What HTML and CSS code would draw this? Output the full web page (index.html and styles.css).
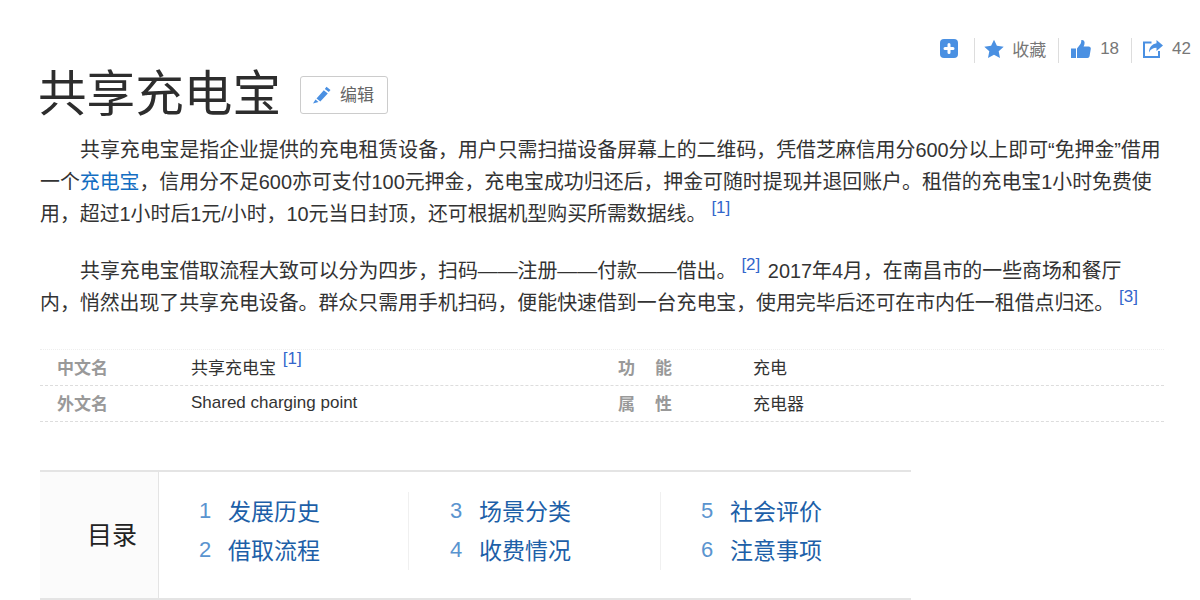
FILE: index.html
```html
<!DOCTYPE html>
<html lang="zh-CN">
<head>
<meta charset="utf-8">
<title>共享充电宝</title>
<link rel="stylesheet" href="styles.css">
</head>
<body>
<div class="page">
  <div class="tools">
    <span class="tool tool-add">
      <svg class="ic" width="18" height="19" viewBox="0 0 18 19"><rect x="0" y="0" width="18" height="19" rx="4" fill="#4a90e2"/><path d="M9 5.500v8M5 9.500h8" stroke="#fff" stroke-width="3" stroke-linecap="round"/></svg>
    </span>
    <span class="tool tool-star">
      <svg class="ic" width="20" height="20" viewBox="0 0 20 20"><path d="M10 .8l2.900 6 6.800.9-5 4.600 1.300 6.700L10 15.700 4 19l1.300-6.700-5-4.600 6.800-.9z" fill="#4a90e2"/></svg>
      <span class="tool-label tool-label-cjk cjk">收藏</span>
    </span>
    <span class="tool tool-like">
      <svg class="ic" width="20" height="20" viewBox="0 0 20 20"><path d="M0 9.500h5V19H0zM6 9.500l3.300-4.300c.7-1 1-2.300 1-4.200 1.900-.5 3.300.8 3.300 2.800 0 1.400-.4 2.500-1 3.700h5c1.500 0 2.400 1 2.200 2.300l-1.200 7.300c-.2 1.200-1 1.900-2.200 1.900H6z" fill="#4a90e2"/></svg>
      <span class="tool-label">18</span>
    </span>
    <span class="tool tool-share">
      <svg class="ic" width="20" height="20" viewBox="0 0 20 20"><path d="M8.500 3.500H1v14.500h15v-6" fill="none" stroke="#4a90e2" stroke-width="2"/><path d="M13.500 1l6.500 5.500-6.500 5.500V8.800C10 8.800 7.500 10.300 6 13.500 6 8.500 9 5 13.500 4.300z" fill="#4a90e2"/></svg>
      <span class="tool-label">42</span>
    </span>
  </div>
  <div class="title-row">
    <h1 class="title">共享充电宝</h1>
    <a class="edit">
      <svg width="18" height="18" viewBox="0 0 18 18"><path d="M13.500 .8L17.500 4l-1.700 2.100-4-3.200zM10.800 4.200l4 3.200-7.500 8.200-2.800-2.300-1-.8zM2.500 13.500l3 2.500L0 17.500z" fill="#4a90e2"/></svg>
      <span class="edit-label">编辑</span>
    </a>
  </div>
  <div class="para">共享充电宝是指企业提供的充电租赁设备，用户只需扫描设备屏幕上的二维码，凭借芝麻信用分600分以上即可“免押金”借用一个<a class="link">充电宝</a>，信用分不足600亦可支付100元押金，充电宝成功归还后，押金可随时提现并退回账户。租借的充电宝1小时免费使用，超过1小时后1元/小时，10元当日封顶，还可根据机型购买所需数据线。<sup class="ref">[1]</sup></div>
  <div class="para">共享充电宝借取流程大致可以分为四步，扫码——注册——付款——借出。<sup class="ref">[2]</sup> 2017年4月，在南昌市的一些商场和餐厅<br>内，悄然出现了共享充电设备。群众只需用手机扫码，便能快速借到一台充电宝，使用完毕后还可在市内任一租借点归还。<sup class="ref">[3]</sup></div>
  <div class="info">
    <div class="info-row">
      <div class="info-cell"><span class="info-name">中文名</span><span class="info-val">共享充电宝 <sup class="ref small">[1]</sup></span></div>
      <div class="info-cell"><span class="info-name wide">功能</span><span class="info-val">充电</span></div>
    </div>
    <div class="info-row">
      <div class="info-cell"><span class="info-name">外文名</span><span class="info-val latin">Shared charging point</span></div>
      <div class="info-cell"><span class="info-name wide">属性</span><span class="info-val">充电器</span></div>
    </div>
  </div>
  <div class="toc">
    <div class="toc-head">目录</div>
    <div class="toc-body">
      <ol class="toc-col">
        <li><span class="num">1</span><a>发展历史</a></li>
        <li><span class="num">2</span><a>借取流程</a></li>
      </ol>
      <ol class="toc-col mid">
        <li><span class="num">3</span><a>场景分类</a></li>
        <li><span class="num">4</span><a>收费情况</a></li>
      </ol>
      <ol class="toc-col last">
        <li><span class="num">5</span><a>社会评价</a></li>
        <li><span class="num">6</span><a>注意事项</a></li>
      </ol>
    </div>
  </div>
</div>
</body>
</html>
```
FILE: styles.css
```css
* { box-sizing: border-box; }
html, body { margin: 0; padding: 0; }
body {
  width: 1200px;
  height: 600px;
  overflow: hidden;
  background: #fff;
  color: #333;
  font-family: "Liberation Sans", "Noto Sans CJK SC", sans-serif;
}
.page { padding: 38px 0 0 40px; }
.tools {
  display: flex;
  justify-content: flex-end;
  height: 25px;
  font-size: 17px;
  color: #777;
}
.tool {
  display: flex;
  align-items: flex-start;
  height: 25px;
  padding-top: 1px;
  border-left: 1px solid #ddd;
}
.tool-add { border-left: 0; padding-right: 16px; }
.tool-star { padding-left: 9px; padding-right: 12px; }
.tool-like { padding-left: 12px; padding-right: 12px; }
.tool-share { padding-left: 11px; padding-right: 9px; }
.tool-label { margin-left: 9px; line-height: 20px; }
.tool-label-cjk { margin-left: 8px; }
.cjk { font-family: "Noto Sans CJK SC", sans-serif; }
.ic { display: block; }
.title-row { display: flex; align-items: center; height: 60px; margin-top: 1px; }
.title {
  margin: 0 0 0 -2px;
  font-size: 48.6px;
  line-height: 60px;
  font-weight: 400;
  color: #2d2d2d;
}
.edit {
  display: flex;
  align-items: center;
  gap: 9px;
  width: 88px;
  height: 38px;
  margin: 2px 0 0 19px;
  padding-left: 12px;
  border: 1px solid #ccc;
  border-radius: 3px;
  font-size: 17px;
  color: #666;
}
.edit-label { margin-bottom: 2px; font-family: "Noto Sans CJK SC", sans-serif; line-height: 20px; }
.para {
  width: 1124px;
  margin-bottom: 25px;
  font-size: 19.9px;
  line-height: 32px;
  text-indent: 40px;
  color: #333;
}
.title-row + .para { margin-top: 10px; }
.link { color: #136ec2; }
.ref {
  font-size: 17px;
  line-height: 0;
  color: #3366cc;
  vertical-align: 8px;
  margin: 0 2px 0 5px;
}
.ref.small { margin-left: 2px; vertical-align: 10px; }
.info {
  width: 1124px;
  margin-top: 30px;
  border-top: 1px dotted #eee;
}
.info-row {
  display: flex;
  height: 36px;
  padding-bottom: 3px;
  border-bottom: 1px dashed #ddd;
  font-size: 17px;
}
.info-cell { display: flex; align-items: center; width: 561px; }
.info-name {
  width: 151px;
  padding-left: 17px;
  font-weight: 700;
  color: #999;
}
.info-name.wide { width: 152px; flex: none; letter-spacing: 20px; white-space: nowrap; }
.info-val { color: #333; }
.latin { padding-top: 2px; }
.toc {
  display: flex;
  width: 871px;
  height: 130px;
  margin-top: 48px;
  border-top: 2px solid #e4e4e4;
  border-bottom: 2px solid #e4e4e4;
}
.toc-head {
  width: 119px;
  padding: 46px 21px 0 0;
  background: #fbfbfb;
  border-right: 1px solid #e4e4e4;
  font-size: 25px;
  line-height: 34px;
  text-align: right;
  color: #222;
}
.toc-body { display: flex; padding-top: 20px; }
.toc-col {
  width: 250px;
  height: 78px;
  margin: 0;
  padding: 0 0 0 40px;
  list-style: none;
  border-right: 1px solid #f0f0f0;
}
.toc-col.mid { width: 252px; padding-left: 41px; }
.toc-col.last { border-right: 0; padding-left: 40px; }
.toc-col li {
  display: flex;
  align-items: center;
  height: 39px;
  font-size: 23px;
  color: #1d5fa8;
}
.toc-col li:first-child { margin-top: -2px; }
.num { width: 29px; padding-top: 2px; color: #5a94cf; font-size: 22px; }
```
